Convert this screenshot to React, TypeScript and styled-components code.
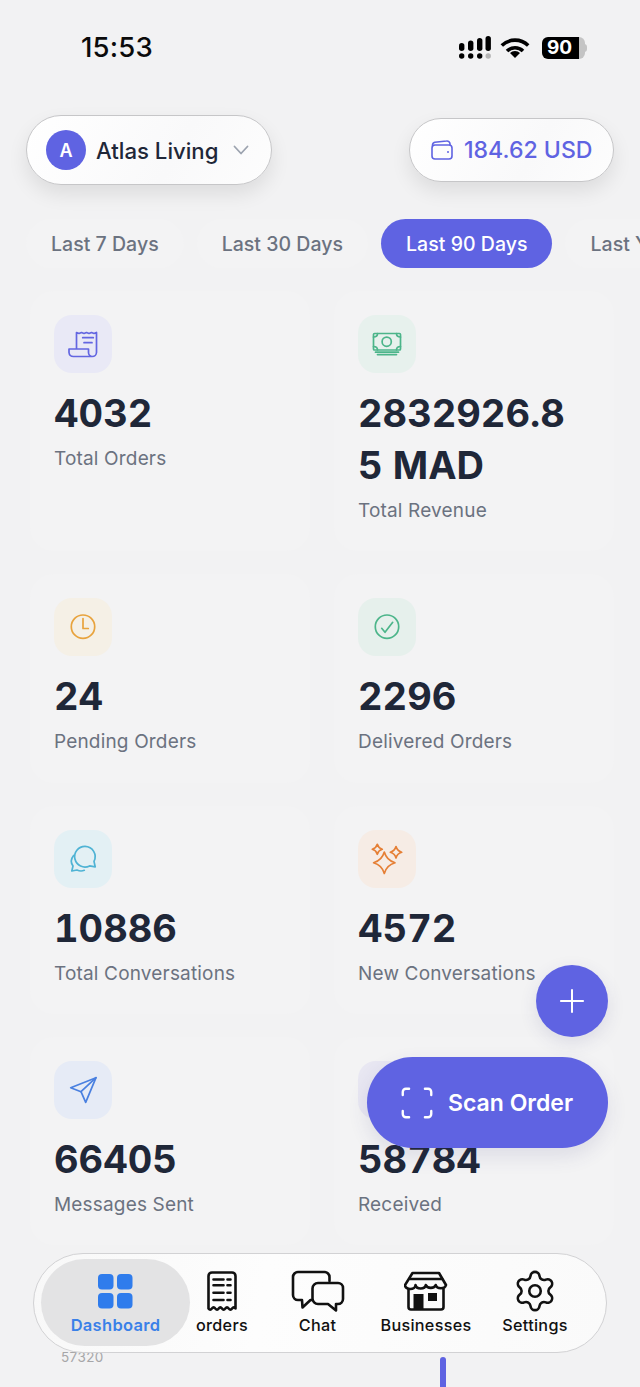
import React from "react";
import styled, { createGlobalStyle } from "styled-components";
import { Plus, Scan, Settings } from "lucide-react";

const INDIGO = "#5f63e2";
const INK = "#1f2738";
const MUTED = "#6b7280";

const GlobalStyle = createGlobalStyle`
  html, body {
    margin: 0;
    padding: 0;
    background: #f2f2f3;
  }
  * {
    box-sizing: border-box;
  }
`;

const Page = styled.div`
  position: relative;
  width: 640px;
  height: 1387px;
  overflow: hidden;
  background: #f2f2f3;
  font-family: Inter, "Liberation Sans", sans-serif;
`;

const StatusBar = styled.div`
  height: 115px;
  padding: 29px 55px 0 81px;
  display: flex;
  align-items: flex-start;
  justify-content: space-between;
`;

const Clock = styled.div`
  font-size: 27.5px;
  line-height: 37px;
  font-weight: 500;
  letter-spacing: 0.2px;
  color: #0b0b0b;
`;

const StatusIcons = styled.div`
  display: flex;
  align-items: center;
  gap: 9px;
  height: 37px;
`;

const Battery = styled.div`
  position: relative;
  width: 43px;
  height: 22px;
  margin-left: 3px;
  display: flex;
  align-items: center;
  background: linear-gradient(to right, #000 37px, #c4c4c4 37px);
  border-radius: 6px;
  color: #fff;
  font-size: 19px;
  font-weight: 700;
  padding-left: 5px;
  &::after {
    content: "";
    position: absolute;
    right: -2px;
    top: 7px;
    width: 3px;
    height: 8px;
    border-radius: 0 3px 3px 0;
    background: #c4c4c4;
  }
`;

const Header = styled.div`
  display: flex;
  align-items: center;
  justify-content: space-between;
  height: 70px;
  padding: 0 26px;
`;

const Pill = styled.div<{ $h: number }>`
  height: ${(p) => p.$h}px;
  border-radius: ${(p) => p.$h / 2}px;
  display: flex;
  align-items: center;
  background: linear-gradient(120deg, #ffffff 0%, #f9f9fa 60%, #fdfdfd 100%);
  border: 1px solid #c6c6c8;
  box-shadow: 0 9px 20px rgba(0, 0, 0, 0.09);
`;

const BusinessPill = styled(Pill)`
  width: 246px;
  padding-left: 19px;
`;

const WalletPill = styled(Pill)`
  width: 205px;
  padding-left: 21px;
  gap: 11px;
`;

const Avatar = styled.div`
  width: 40px;
  height: 40px;
  border-radius: 50%;
  background: ${INDIGO};
  color: #fff;
  font-size: 18px;
  font-weight: 600;
  display: flex;
  align-items: center;
  justify-content: center;
`;

const BusinessName = styled.div`
  margin-left: 10px;
  font-size: 22.2px;
  font-weight: 500;
  color: ${INK};
`;

const Chevron = styled.svg`
  margin-left: 15px;
`;

const Balance = styled.div`
  font-size: 23.1px;
  font-weight: 500;
  color: ${INDIGO};
`;

const Tabs = styled.div`
  display: flex;
  gap: 13px;
  margin-top: 34px;
  padding-left: 26px;
  overflow: hidden;
`;

const Tab = styled.div<{ $active?: boolean }>`
  flex: none;
  height: 49px;
  padding: 0 25px;
  border-radius: 25px;
  display: flex;
  align-items: center;
  font-size: 19.5px;
  font-weight: 500;
  letter-spacing: 0.03px;
  color: ${(p) => (p.$active ? "#fff" : MUTED)};
  background: ${(p) => (p.$active ? INDIGO : "#f3f3f4")};
`;

const Grid = styled.div`
  display: grid;
  grid-template-columns: 280px 280px;
  column-gap: 24px;
  row-gap: 23.2px;
  margin-top: 23.1px;
  padding-left: 30px;
`;

const Card = styled.div`
  padding: 24px 34px 27.2px 24px;
  border-radius: 24px;
  background: #f3f3f4;
`;

const IconBox = styled.div<{ $tint: string }>`
  width: 58px;
  height: 58px;
  border-radius: 18px;
  background: ${(p) => p.$tint};
`;

const Value = styled.div`
  margin-top: 14px;
  font-size: 38px;
  line-height: 52px;
  font-weight: 700;
  font-variant-numeric: tabular-nums;
  color: ${INK};
  overflow-wrap: anywhere;
`;

const Label = styled.div`
  margin-top: 7px;
  font-size: 19px;
  line-height: 26px;
  letter-spacing: 0.17px;
  color: ${MUTED};
  white-space: nowrap;
`;

const ChartRow = styled.div`
  display: grid;
  grid-template-columns: 379px 6px;
  margin-top: 104px;
  padding-left: 61px;
`;

const AxisLabel = styled.div`
  font-size: 13.5px;
  line-height: 16px;
  letter-spacing: 0.4px;
  color: #a6a6a8;
`;

const ChartBar = styled.div`
  height: 60px;
  margin-top: 8px;
  border-radius: 3px 3px 0 0;
  background: ${INDIGO};
`;

const PlusButton = styled.div`
  position: absolute;
  left: 536px;
  top: 965px;
  width: 72px;
  height: 72px;
  border-radius: 50%;
  background: ${INDIGO};
  display: flex;
  align-items: center;
  justify-content: center;
  box-shadow: 0 6px 18px rgba(60, 60, 120, 0.12);
`;

const ScanButton = styled.div`
  position: absolute;
  left: 367px;
  top: 1057px;
  width: 241px;
  height: 91px;
  padding-left: 31px;
  border-radius: 46px;
  background: ${INDIGO};
  color: #fff;
  display: flex;
  align-items: center;
  gap: 12px;
  font-size: 23px;
  font-weight: 600;
  box-shadow: 0 8px 20px rgba(60, 60, 120, 0.12);
`;

const Nav = styled.div`
  position: absolute;
  left: 33px;
  top: 1253px;
  width: 574px;
  height: 100px;
  padding: 5px 7px;
  border-radius: 50px;
  border: 1px solid #d2d2d4;
  background: linear-gradient(100deg, #f8f8f8 0%, #fdfdfd 40%, #fafafa 100%);
  display: grid;
  grid-template-columns: 149px 64px 127px 90px 128px;
`;

const NavItem = styled.div<{ $active?: boolean }>`
  height: 87px;
  padding-top: 10px;
  border-radius: 44px;
  display: flex;
  flex-direction: column;
  align-items: center;
  background: ${(p) => (p.$active ? "#e3e3e4" : "transparent")};
  color: ${(p) => (p.$active ? "#3a80e8" : "#111")};
`;

const NavIcon = styled.div`
  height: 44px;
  display: flex;
  align-items: center;
  justify-content: center;
`;

const NavLabel = styled.div<{ $active?: boolean }>`
  margin-top: 1px;
  font-size: ${(p) => (p.$active ? 16.5 : 16.2)}px;
  line-height: 22px;
  font-weight: ${(p) => (p.$active ? 600 : 450)};
  letter-spacing: 0.3px;
  white-space: nowrap;
`;

// card icons share the 58x58 box as viewBox, so coordinates read straight off the screenshot
const BoxIcon = ({ color, children }: { color: string; children: React.ReactNode }) => (
  <svg
    width="58"
    height="58"
    viewBox="0 0 58 58"
    fill="none"
    stroke={color}
    strokeWidth="1.7"
    strokeLinecap="round"
    strokeLinejoin="round"
  >
    {children}
  </svg>
);

const star = (x: number, y: number, r: number) => {
  const c = r * 0.22;
  return `M${x} ${y - r}Q${x + c} ${y - c} ${x + r} ${y}Q${x + c} ${y + c} ${x} ${y + r}Q${x - c} ${y + c} ${x - r} ${y}Q${x - c} ${y - c} ${x} ${y - r}Z`;
};

const stats = [
  {
    value: "4032",
    label: "Total Orders",
    tint: "#e9e9f6",
    icon: (
      <BoxIcon color="#6366e1">
        <path d="M22.5 34V17.5l2.5 1 2.500-1 2.500 1 2.500-1 2.500 1 2.500-1 2.500 1 2.500-1V37.500a4.200 4.200 0 0 1-4.200 4H19.500a4.500 4.500 0 0 1-4.500-4V34h19.500v3.500a4 4 0 0 0 4 4" />
        <path d="M28.700 22.700h10.600M30 27.700h8" />
      </BoxIcon>
    ),
  },
  {
    value: "2832926.85 MAD",
    label: "Total Revenue",
    tint: "#e7f1ed",
    icon: (
      <BoxIcon color="#4cb58a">
        <rect x="15.500" y="18.500" width="27" height="16.500" rx="1" />
        <circle cx="28.700" cy="26.700" r="4.600" />
        <path d="M19.500 18.500c0 2-1.500 3.500-4 3.500M38.500 18.500c0 2 1.500 3.500 4 3.500M19.500 35c0-2-1.500-3.500-4-3.500M38.500 35c0-2 1.500-3.500 4-3.500" />
        <path d="M17.500 37.200h23M19.500 39.600h19" />
      </BoxIcon>
    ),
  },
  {
    value: "24",
    label: "Pending Orders",
    tint: "#f5f0e6",
    icon: (
      <BoxIcon color="#e8a33d">
        <circle cx="29" cy="28.700" r="11.700" />
        <path d="M29 20.500v10h5.300" />
      </BoxIcon>
    ),
  },
  {
    value: "2296",
    label: "Delivered Orders",
    tint: "#e6f0ec",
    icon: (
      <BoxIcon color="#4cb58a">
        <circle cx="29" cy="28.700" r="11.700" />
        <path d="M23.700 30.300l3.300 4 7.700-10" />
      </BoxIcon>
    ),
  },
  {
    value: "10886",
    label: "Total Conversations",
    tint: "#e3f0f4",
    icon: (
      <BoxIcon color="#4fb3d4">
        <path d="M31 16.400a10.300 10.300 0 1 0 4.600 19.500l5.600.9-1.200-5.400A10.300 10.300 0 0 0 31 16.400z" />
        <path d="M19.600 25.500c-2.800 3.400-2.600 7.600-.6 10.500l-1.200 5 5.200-1c2.400 1.200 5 1.300 7.300.3" />
      </BoxIcon>
    ),
  },
  {
    value: "4572",
    label: "New Conversations",
    tint: "#f6ece5",
    icon: (
      <BoxIcon color="#e57f35">
        <path d={star(26.3, 32.7, 10.7)} />
        <path d={star(19.3, 19.3, 5)} />
        <path d={star(38, 22.3, 5.7)} />
      </BoxIcon>
    ),
  },
  {
    value: "66405",
    label: "Messages Sent",
    tint: "#e6ebf6",
    icon: (
      <BoxIcon color="#4a80e0">
        <path d="M42 16.700 16.700 26.700 27 30.700l4.700 10.600L42 16.700z" />
        <path d="M42 16.700 27 30.700" />
      </BoxIcon>
    ),
  },
  {
    value: "58784",
    label: "Received",
    tint: "#e8e7f2",
    icon: (
      <BoxIcon color="#6366e1">
        <path d="M29 18v18M22 29l7 7 7-7" />
      </BoxIcon>
    ),
  },
];

const tabs = ["Last 7 Days", "Last 30 Days", "Last 90 Days", "Last Year"];

const SignalIcon = () => (
  <svg width="34" height="26" viewBox="0 0 34 26" fill="#000">
    <rect x="2" y="8" width="5.400" height="8" rx="2.700" />
    <rect x="11" y="5.500" width="5.400" height="10.500" rx="2.700" />
    <rect x="20" y="3" width="5.400" height="13" rx="2.700" />
    <rect x="28.500" y="1" width="5.400" height="15" rx="2.700" />
    <circle cx="4.700" cy="21" r="2.700" />
    <circle cx="13.700" cy="21" r="2.700" />
    <circle cx="22.700" cy="21" r="2.700" />
    <circle cx="31.200" cy="21" r="2.700" fill="#b5b5b5" />
  </svg>
);

const WifiIcon = () => (
  <svg width="30" height="22" viewBox="0 0 30 22" fill="none" stroke="#000" strokeWidth="3.600">
    <path d="M1.800 8.500a19 19 0 0 1 26.400 0" />
    <path d="M7 14a11.500 11.500 0 0 1 16 0" />
    <path d="M15 21l-5-5a7 7 0 0 1 10 0z" fill="#000" stroke="none" />
  </svg>
);

const WalletIcon = () => (
  <svg width="22" height="20" viewBox="0 0 22 20" fill="none" stroke={INDIGO} strokeWidth="1.600" strokeLinejoin="round">
    <rect x="1" y="5" width="20" height="14" rx="3" />
    <path d="M1.500 6.500V5a3 3 0 0 1 2.300-2.800L15.500 1A3 3 0 0 1 19 3.800V5" />
    <circle cx="17" cy="12" r="1" fill={INDIGO} stroke="none" />
  </svg>
);

const DashboardIcon = () => (
  <svg width="35" height="35" viewBox="0 0 35 35" fill="#2f7cec">
    <rect x="0" y="0" width="15.500" height="15.500" rx="4" />
    <rect x="19" y="0" width="15.500" height="15.500" rx="4" />
    <rect x="0" y="19" width="15.500" height="15.500" rx="4" />
    <rect x="19" y="19" width="15.500" height="15.500" rx="4" />
  </svg>
);

const OrdersIcon = () => (
  <svg width="32" height="40" viewBox="0 0 32 40" fill="none" stroke="#111" strokeWidth="2.600" strokeLinecap="round" strokeLinejoin="round">
    <path d="M2.500 37.500V5a3.500 3.500 0 0 1 3.500-3.500h20A3.500 3.500 0 0 1 29.500 5v32.500q-1.800-2.200-3.400 0t-3.400 0q-1.700-2.200-3.400 0t-3.300 0q-1.700-2.200-3.300 0t-3.400 0q-1.700-2.200-3.400 0t-3.400 0z" />
    <path d="M7.500 8.500h10M7.500 14.200h10M7.500 21.800h10M7.500 29h10" />
    <path d="M21.500 8.500h3M21.500 14.200h3M21.500 21.800h3M21.500 29h3" />
  </svg>
);

const ChatIcon = () => (
  <svg width="54" height="42" viewBox="0 0 54 42" fill="none" stroke="#111" strokeWidth="2.600" strokeLinecap="round" strokeLinejoin="round">
    <path d="M38.500 11V7a5 5 0 0 0-5-5H7a5 5 0 0 0-5 5v18a5 5 0 0 0 5 5h4l.5 7.500 8-7.500H21" />
    <path d="M27 13h20a5 5 0 0 1 5 5v11a5 5 0 0 1-5 5h-2v6.500L37 34H27a5.500 5.500 0 0 1-5.500-5.500v-10A5.500 5.500 0 0 1 27 13z" />
  </svg>
);

const StoreIcon = () => (
  <svg width="44" height="40" viewBox="0 0 44 40" fill="none" stroke="#111" strokeWidth="2.600" strokeLinecap="round" strokeLinejoin="round">
    <path d="M8.500 2h26.500L42 14a5.200 4 0 0 1-10.200 0 5.200 4 0 0 1-10 0 5.200 4 0 0 1-10.300 0A5.200 4 0 0 1 1 14z" />
    <path d="M6 8h32" />
    <path d="M4.500 18v18A2.500 2.500 0 0 0 7 38.500h30a2.500 2.500 0 0 0 2.500-2.500V18" />
    <rect x="9.500" y="23" width="10" height="15" fill="#111" stroke="none" />
    <rect x="24" y="22" width="9" height="8" fill="#111" stroke="none" />
  </svg>
);

const navItems = [
  { label: "Dashboard", icon: <DashboardIcon />, active: true },
  { label: "orders", icon: <OrdersIcon /> },
  { label: "Chat", icon: <ChatIcon /> },
  { label: "Businesses", icon: <StoreIcon /> },
  { label: "Settings", icon: <Settings size={46} strokeWidth={1.36} color="#111" /> },
];

export default function App() {
  return (
    <Page>
      <GlobalStyle />
      <StatusBar>
        <Clock>15:53</Clock>
        <StatusIcons>
          <SignalIcon />
          <WifiIcon />
          <Battery>90</Battery>
        </StatusIcons>
      </StatusBar>

      <Header>
        <BusinessPill $h={70}>
          <Avatar>A</Avatar>
          <BusinessName>Atlas Living</BusinessName>
          <Chevron width="16" height="10" viewBox="0 0 16 10" fill="none" stroke="#9ca3af" strokeWidth="1.800" strokeLinecap="round" strokeLinejoin="round">
            <path d="M1.500 1.500 8 8.500l6.500-7" />
          </Chevron>
        </BusinessPill>
        <WalletPill $h={64}>
          <WalletIcon />
          <Balance>184.62 USD</Balance>
        </WalletPill>
      </Header>

      <Tabs>
        {tabs.map((tab) => (
          <Tab key={tab} $active={tab === "Last 90 Days"}>
            {tab}
          </Tab>
        ))}
      </Tabs>

      <Grid>
        {stats.map((stat) => (
          <Card key={stat.label}>
            <IconBox $tint={stat.tint}>{stat.icon}</IconBox>
            <Value>{stat.value}</Value>
            <Label>{stat.label}</Label>
          </Card>
        ))}
      </Grid>

      <ChartRow>
        <AxisLabel>57320</AxisLabel>
        <ChartBar />
      </ChartRow>

      <PlusButton>
        <Plus size={38} strokeWidth={1.26} color="#fff" />
      </PlusButton>
      <ScanButton>
        <Scan size={38} strokeWidth={1.5} color="#fff" />
        Scan Order
      </ScanButton>

      <Nav>
        {navItems.map((item) => (
          <NavItem key={item.label} $active={item.active}>
            <NavIcon>{item.icon}</NavIcon>
            <NavLabel $active={item.active}>{item.label}</NavLabel>
          </NavItem>
        ))}
      </Nav>
    </Page>
  );
}
